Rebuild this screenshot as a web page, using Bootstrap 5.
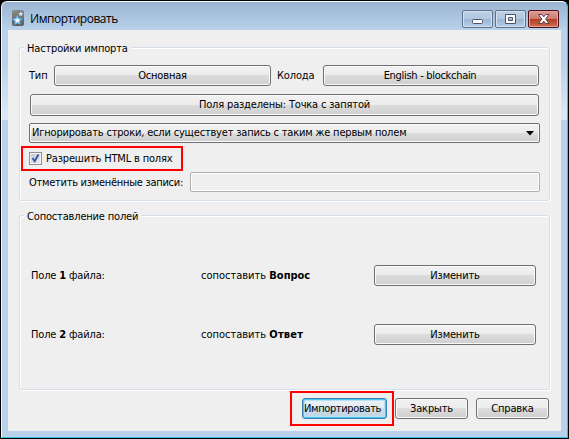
<!DOCTYPE html>
<html lang="ru">
<head>
<meta charset="utf-8">
<meta name="viewport" content="width=device-width, initial-scale=1">
<title>Импортировать</title>
<link href="https://cdn.jsdelivr.net/npm/bootstrap@5.3.0/dist/css/bootstrap.min.css" rel="stylesheet">
<style>
html,body{height:439px;overflow:hidden}
body{background:#000;font:11px/14px "DejaVu Sans Condensed","DejaVu Sans",sans-serif;letter-spacing:-.17px;color:#000}
.window{width:567px;height:437px;margin-left:1px;margin-top:1px;border:1px solid #f4f9fd;border-right-color:#35bfe0;border-bottom-color:#35bfe0;border-radius:6px 6px 0 0;padding:0 6px 6px;
 background:linear-gradient(#9ab4d1 0,#a9c3df 14px,#b9d1ea 28px,#b9d1ea 60px,#dbe7f4 112px,#dbe7f4 118px,#b9d1ea 118px)}
.titlebar{height:28px;padding:0 2px 0 4px}
.app-icon,.caption-text,.caps{margin-top:8px}
.caption-text{font:12px/16px "Open Sans","Noto Sans",sans-serif;margin-left:6px;letter-spacing:-.48px;padding-top:1px}
.caps{gap:2px}
.cap{width:31px;height:18px;border:1px solid #5c7086;border-radius:2px;box-shadow:inset 0 0 0 1px #d3e1f0;background:linear-gradient(#bdd0e5 0,#b1c8df 48%,#9ab5d2 50%,#b5cee8)}
.cap-close{border-color:#4c101c;box-shadow:inset 0 0 0 1px #e0a499;background:linear-gradient(#dda096 0,#cd7b6d 48%,#b23a22 50%,#cf6f51)}
.client{height:401px;background:#efefef;padding:17px 11px 0 11px}
.group{border:1px solid #d5dfe9;border-radius:3px;box-shadow:inset 1px 1px #fff,1px 1px #fff}
.group-title{height:14px;line-height:15px;margin:-7px 0 0 4px;padding:0 3px;background:#efefef;width:max-content}
.g1{height:154px}
.g2{height:175px;margin-top:14px}
.btn.win{--bs-btn-padding-x:0;--bs-btn-padding-y:0;height:21px;font:inherit;line-height:18px;letter-spacing:inherit;color:#000;border:1px solid #707070;border-radius:3px;box-shadow:inset 0 0 0 1px #fafafa;background:linear-gradient(#f2f2f2 0,#ebebeb 48%,#dcdcdc 50%,#cfcfcf);white-space:nowrap}
.btn.win.tall{height:22px;line-height:20px}
.btn.win.go{padding-right:4px;border-color:#3c7fb1;box-shadow:inset 0 0 0 1px #48c7ee,inset 0 0 0 2px #b5e3f5;background:linear-gradient(#edf3f8 0,#e2ecf4 48%,#cddde9 50%,#c0d4e3);letter-spacing:-.36px}
.w-type{width:217px}.w-deck{width:216px}.w73{width:73px}.w85{width:85px}.w162{width:162px}
.row-type{margin:10px 10px 0 9px}
.row-sep{margin:8px 10px 0 10px}
.deck-label{margin-left:6px;width:46px}
.btn.win.w-deck{letter-spacing:-.3px;padding-right:2px}
.combo{height:20px;margin:7px 9px 0;padding:0 4px 0 2px;letter-spacing:-.185px;border:1px solid #707070;border-radius:2px;box-shadow:inset 0 0 0 1px #fafafa;background:linear-gradient(#f2f2f2 0,#ebebeb 48%,#dcdcdc 50%,#cfcfcf)}
.row-tags{margin:1px 9px 0;letter-spacing:-.27px}
.row-tags span{padding-top:2px}
.field{width:350px;height:20px;padding:0;border:1px solid #afafaf;border-radius:2px;background:#efefef;box-shadow:inset 0 0 0 1px #fff}
.hl{border:2px solid #f00}
.hl-check{width:162px;height:25px;margin:3px 0 0 1px;padding:0 0 1px 6px;gap:4px}
.hl-check .check-label{padding-top:1px}
.box{width:13px;height:13px;border:1px solid #8e8f8f;background:linear-gradient(135deg,#c2c8cf,#eef0f2);box-shadow:inset 0 0 0 1px #f4f4f4}
.hl-go{width:104px;height:35px;padding-left:10px}
.map-row{height:21px;padding:0 13px 0 11px}
.map-1{margin-top:42px}.map-2{margin-top:38px}
.map-row b{letter-spacing:0}
.c2{letter-spacing:0}
.map-2 .c2 b{letter-spacing:.2px}
.c1{width:170px}
.foot{margin-top:1px;padding-right:1px}
.gap-a{margin-left:1px}.gap-b{margin-left:8px}
</style>
<script src="https://cdn.jsdelivr.net/npm/bootstrap@5.3.0/dist/js/bootstrap.bundle.min.js"></script>
</head>
<body>
<div class="window">
 <div class="titlebar d-flex align-items-start">
  <svg class="app-icon" width="12" height="16" viewBox="0 0 12 16">
   <defs><linearGradient id="g" x1="0" y1="0" x2="0" y2="1"><stop offset="0" stop-color="#8a8a8a"/><stop offset="1" stop-color="#5c5c5c"/></linearGradient></defs>
   <rect width="12" height="16" rx="2" fill="url(#g)"/>
   <path d="M5.300 6.200l1.300 2.400 2.700.4-1.800 2 .5 2.700-2.600-1-2.500 1.200.3-2.800L1.300 9.200l2.700-.6z" fill="#f2faff" stroke="#66b7ea" stroke-width="1.200"/>
   <path d="M8.800 1.800l.7 1.300 1.500.2-1 1.100.2 1.500-1.400-.6-1.400.6.2-1.500-.9-1.100 1.500-.2z" fill="#d5ecfc"/>
  </svg>
  <div class="caption-text flex-grow-1">Импортировать</div>
  <div class="caps d-flex">
   <div class="cap d-flex justify-content-center"><svg width="29" height="16"><rect x="9.500" y="8.500" width="10" height="4" rx="1" fill="#fff" stroke="#4d5668"/></svg></div>
   <div class="cap d-flex justify-content-center"><svg width="29" height="16"><path d="M9.500 3.500h10v9h-10zM12.500 6.500v3h4v-3z" fill="#fff" fill-rule="evenodd" stroke="#4d5668"/></svg></div>
   <div class="cap cap-close d-flex justify-content-center"><svg width="29" height="16"><path d="M9.500 3.500h3.300l2 2.300 2-2.300h3.200l-3.300 4.500 3.300 4.500h-3.200l-2-2.300-2 2.300H9.500L12.800 8z" fill="#fff" stroke="#5a4048"/></svg></div>
  </div>
 </div>
 <div class="client">
  <div class="group g1">
   <div class="group-title">Настройки импорта</div>
   <div class="row-type d-flex align-items-center">
    <span>Тип</span>
    <button class="btn win w-type ms-auto">Основная</button>
    <span class="deck-label">Колода</span>
    <button class="btn win w-deck">English - blockchain</button>
   </div>
   <div class="row-sep"><button class="btn win tall w-100 d-block">Поля разделены: Точка с запятой</button></div>
   <div class="combo d-flex align-items-center justify-content-between"><span>Игнорировать строки, если существует запись с таким же первым полем</span><svg width="9" height="5"><path d="M0 0h8L4 4.500z"/></svg></div>
   <div class="hl hl-check d-flex align-items-center"><span class="box d-flex"><svg width="11" height="11"><path d="M2.500 5l2.200 3.200L8.500 1.500" fill="none" stroke="#3c5aa0" stroke-width="2"/></svg></span><span class="check-label">Разрешить HTML в полях</span></div>
   <div class="row-tags d-flex align-items-center"><span class="text-nowrap">Отметить изменённые записи:</span><input class="field ms-auto" disabled></div>
  </div>
  <div class="group g2">
   <div class="group-title">Сопоставление полей</div>
   <div class="map-row map-1 d-flex align-items-center"><span class="c1">Поле <b>1</b> файла:</span><span class="c2">сопоставить <b>Вопрос</b></span><button class="btn win w162 ms-auto">Изменить</button></div>
   <div class="map-row map-2 d-flex align-items-center"><span class="c1">Поле <b>2</b> файла:</span><span class="c2">сопоставить <b>Ответ</b></span><button class="btn win w162 ms-auto">Изменить</button></div>
  </div>
  <div class="foot d-flex align-items-center justify-content-end">
   <div class="hl hl-go d-flex align-items-center"><button class="btn win go w85">Импортировать</button></div>
   <button class="btn win w73 gap-a">Закрыть</button>
   <button class="btn win w73 gap-b">Справка</button>
  </div>
 </div>
</div>
</body>
</html>
